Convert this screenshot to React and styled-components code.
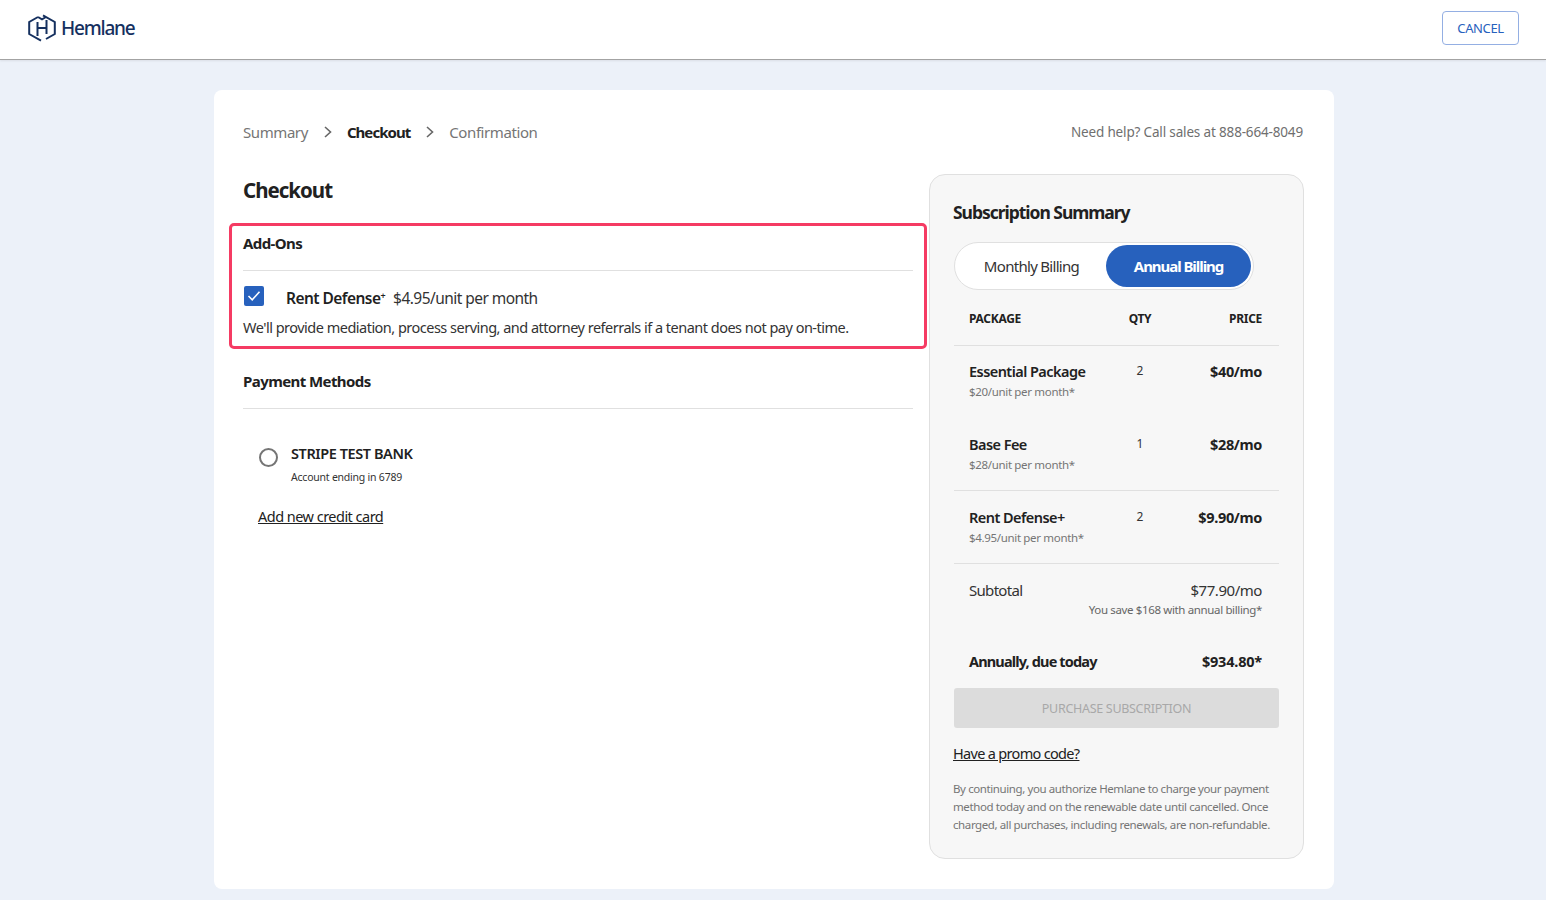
import React from "react";
import styled, { createGlobalStyle } from "styled-components";

const Global = createGlobalStyle`
  html, body { margin: 0; padding: 0; background: #ecf1f9; }
  body { font-family: "Noto Sans", "Open Sans", sans-serif; color: #212121; overflow: hidden; }
  * { box-sizing: border-box; }
`;
const Page = styled.div`height: 900px; display: flex; flex-direction: column;`;
const Header = styled.header`
  height: 60px; background: #fff; border-bottom: 1px solid #a3a3a3; box-shadow: 0 1px 2px rgba(0,0,0,.08);
  display: flex; align-items: center; justify-content: space-between; padding: 0 27px 3px 28px; flex: none;
`;
const Brand = styled.div`display: flex; align-items: center; gap: 5px; color: #15305f;`;
const BrandName = styled.span`font-size: 19px; font-weight: 500; letter-spacing: -1.2px; line-height: 28px;`;
const CancelButton = styled.button`
  width: 77px; height: 34px; border: 1px solid #94afe3; border-radius: 4px; background: #fff;
  color: #2761bd; font: 400 13px "Noto Sans", sans-serif; letter-spacing: -0.4px; padding: 0;
`;
const Card = styled.main`
  width: 1120px; height: 799px; margin: 30px auto 0 214px; background: #fff; border-radius: 8px;
  padding: 30px 31px 0 29px;
`;
const TopRow = styled.div`display: flex; justify-content: space-between; align-items: center; height: 24px; margin-bottom: 30px;`;
const Crumbs = styled.nav`display: flex; align-items: center;`;
const Crumb = styled.span`
  font-size: 15px; letter-spacing: ${p => p.$active ? "-0.95px" : "-0.42px"}; color: ${p => p.$active ? "#212121" : "#757575"};
  font-weight: ${p => p.$active ? 700 : 400};
`;
const Chevron = styled.svg`width: 10px; height: 12px; margin: 0 14px 0 15px; flex: none;`;
const Help = styled.span`font-size: 13.5px; letter-spacing: -0.16px; color: #6f6f6f;`;
const Columns = styled.div`display: grid; grid-template-columns: 670px 375px; column-gap: 16px;`;
const Left = styled.section`display: flex; flex-direction: column;`;
const Title = styled.h1`margin: 0 0 17px; font-size: 20.5px; line-height: 32px; font-weight: 700; letter-spacing: -1px;`;
const Highlight = styled.div`
  margin: 0 -14px; height: 126px; border: 3px solid #f53b63; border-radius: 5px; padding: 0 11px;
`;
const SectionHead = styled.h2`
  margin: 0; font-size: 15px; font-weight: 700; letter-spacing: -0.58px; line-height: 24px;
  padding-bottom: ${p => p.$pad}px; padding-top: ${p => p.$top}px; border-bottom: 1px solid #e0e0e0;
`;
const AddonRow = styled.div`display: flex; align-items: center; height: 30px; margin-top: 12px;`;
const CheckBox = styled.span`
  width: 20px; height: 20px; border-radius: 2px; background: #2761bd; display: inline-flex;
  align-items: center; justify-content: center; margin: 0 22px 0 1px; position: relative; top: -2px;
`;
const AddonName = styled.span`font-size: 15.5px; font-weight: 600; letter-spacing: -0.55px;`;
const Sup = styled.sup`font-size: 9px; line-height: 0; vertical-align: 5px;`;
const AddonPrice = styled.span`font-size: 15.5px; letter-spacing: -0.55px; margin-left: 8px; color: #333;`;
const AddonDesc = styled.p`margin: 3px 0 0; font-size: 14.5px; letter-spacing: -0.51px; line-height: 22px; color: #333;`;
const BankRow = styled.label`display: flex; margin: 32px 0 0 15px;`;
const Radio = styled.span`
  width: 19px; height: 19px; border: 2px solid #757575; border-radius: 50%; margin: 7px 13px 0 1px; flex: none;
`;
const BankText = styled.div`display: flex; flex-direction: column;`;
const BankName = styled.span`font-size: 14.5px; line-height: 24px; font-weight: 600; letter-spacing: -0.42px;`;
const BankSub = styled.span`font-size: 10.5px; line-height: 16px; margin-top: 4px; letter-spacing: -0.22px; color: #333;`;
const PlainLink = styled.a`
  display: block; color: #212121; text-decoration: underline; font-size: 14.5px; line-height: 22px;
  letter-spacing: ${p => p.$promo ? "-0.68px" : "-0.52px"};
  ${p => p.$card && "margin: 20px 0 0 15px;"}
  ${p => p.$promo && "margin: 14px 0 0 -1px;"}
`;
const Panel = styled.aside`
  height: 685px; background: #f7f7f7; border: 1px solid #e0e0e0; border-radius: 16px; padding: 24px;
`;
const PanelTitle = styled.h2`margin: 0 0 17px -1px; font-size: 17.5px; line-height: 26px; font-weight: 700; letter-spacing: -1.03px;`;
const Toggle = styled.div`
  width: 300px; height: 48px; padding: 2px; border: 1px solid #e0e0e0; border-radius: 24px; background: #fff;
  display: grid; grid-template-columns: 149px 145px;
`;
const ToggleOption = styled.div`
  display: flex; align-items: center; justify-content: center; border-radius: 22px; font-size: 15px;
  letter-spacing: ${p => p.$on ? "-1.05px" : "-0.7px"}; color: ${p => p.$on ? "#fff" : "#333"}; font-weight: ${p => p.$on ? 700 : 400};
  background: ${p => p.$on ? "#2761bd" : "transparent"};
`;
const Grid = styled.div`
  display: grid; grid-template-columns: 141px 60px 1fr; padding: 0 17px 0 15px;
  ${p => p.$head && "height: 56px; padding-top: 2px; align-items: center; border-bottom: 1px solid #e0e0e0;"}
  ${p => p.$line && "border-bottom: 1px solid #e0e0e0;"}
`;
const Th = styled.span`
  font-size: 12px; font-weight: 700; letter-spacing: -0.3px;
  text-align: ${p => p.$align || "left"};
`;
const RowCell = styled.div`display: flex; flex-direction: column;`;
const RowName = styled.span`font-size: 14.5px; font-weight: 600; letter-spacing: -0.55px; line-height: 22px; white-space: nowrap;`;
const RowSub = styled.span`font-size: 11.5px; line-height: 20px; letter-spacing: -0.33px; color: #757575; white-space: nowrap;`;
const Qty = styled.span`font-size: 12px; text-align: center; line-height: 22px; color: #333;`;
const Price = styled.span`font-size: 14.5px; font-weight: 700; letter-spacing: -0.35px; line-height: 22px; text-align: right;`;
const Row = styled(Grid)`padding-top: ${p => p.$top}px; padding-bottom: ${p => p.$bottom}px;`;
const Totals = styled.div`display: flex; justify-content: space-between; padding: 0 17px 0 15px; margin-top: ${p => p.$top}px;`;
const SubLabel = styled.span`font-size: 15px; letter-spacing: ${p => p.$tight ? "-0.7px" : "-0.45px"}; line-height: 22px; color: #333;`;
const SaveNote = styled.div`text-align: right; padding: 0 17px 0 15px; font-size: 11.5px; letter-spacing: -0.36px; line-height: 16px; color: #666; margin-top: 1px;`;
const DueLabel = styled.span`font-size: 14.5px; font-weight: 700; letter-spacing: ${p => p.$wide ? "-0.2px" : "-0.85px"}; line-height: 22px;`;
const Purchase = styled.button`
  display: block; width: 100%; height: 40px; margin-top: 16px; background: #dcdcdc; border: 0; border-radius: 3px;
  color: #a8a8a8; font: 400 12.5px "Noto Sans", sans-serif; letter-spacing: -0.3px;
`;
const Legal = styled.p`margin: 16px 0 0 -1px; font-size: 11.5px; line-height: 18px; letter-spacing: -0.4px; color: #757575;`;

const Logo = () => (
  <svg width="28" height="28" viewBox="0 0 28 28" fill="none" stroke="#15305f" strokeWidth="2">
    <path d="M10 3 L1.2 8 V20 L13 26.6" />
    <path d="M15 1.4 L26.8 8 V20 L18 25" />
    <path d="M10 3 L14 5.4 L18 3" />
    <path d="M9.5 8 V22 M18.5 6 V20 M9.5 14 H18.5" />
  </svg>
);
const Next = () => (
  <Chevron viewBox="0 0 10 12" fill="none" stroke="#666" strokeWidth="1.6"><path d="M2 1 L7.5 6 L2 11" /></Chevron>
);

export default function App() {
  return (
    <Page>
      <Global />
      <Header>
        <Brand><Logo /><BrandName>Hemlane</BrandName></Brand>
        <CancelButton>CANCEL</CancelButton>
      </Header>
      <Card>
        <TopRow>
          <Crumbs>
            <Crumb>Summary</Crumb><Next />
            <Crumb $active>Checkout</Crumb><Next />
            <Crumb>Confirmation</Crumb>
          </Crumbs>
          <Help>Need help? Call sales at 888-664-8049</Help>
        </TopRow>
        <Columns>
          <Left>
            <Title>Checkout</Title>
            <Highlight>
              <SectionHead $top={5} $pad={15}>Add-Ons</SectionHead>
              <AddonRow>
                <CheckBox>
                  <svg width="14" height="12" viewBox="0 0 14 12" fill="none" stroke="#fff" strokeWidth="1.6"><path d="M1.5 6 L5.2 9.8 L12.5 1.8" /></svg>
                </CheckBox>
                <AddonName>Rent Defense<Sup>+</Sup></AddonName>
                <AddonPrice>$4.95/unit per month</AddonPrice>
              </AddonRow>
              <AddonDesc>We'll provide mediation, process serving, and attorney referrals if a tenant does not pay on-time.</AddonDesc>
            </Highlight>
            <SectionHead $top={20} $pad={15}>Payment Methods</SectionHead>
            <BankRow>
              <Radio />
              <BankText>
                <BankName>STRIPE TEST BANK</BankName>
                <BankSub>Account ending in 6789</BankSub>
              </BankText>
            </BankRow>
            <PlainLink $card>Add new credit card</PlainLink>
          </Left>
          <Panel>
            <PanelTitle>Subscription Summary</PanelTitle>
            <Toggle>
              <ToggleOption>Monthly Billing</ToggleOption>
              <ToggleOption $on>Annual Billing</ToggleOption>
            </Toggle>
            <Grid $head>
              <Th>PACKAGE</Th><Th $align="center">QTY</Th><Th $align="right">PRICE</Th>
            </Grid>
            <Row $top={14} $bottom={0}>
              <RowCell><RowName>Essential Package</RowName><RowSub>$20/unit per month*</RowSub></RowCell>
              <Qty>2</Qty><Price>$40/mo</Price>
            </Row>
            <Row $top={31} $bottom={15} $line>
              <RowCell><RowName>Base Fee</RowName><RowSub>$28/unit per month*</RowSub></RowCell>
              <Qty>1</Qty><Price>$28/mo</Price>
            </Row>
            <Row $top={15} $bottom={15} $line>
              <RowCell><RowName>Rent Defense+</RowName><RowSub>$4.95/unit per month*</RowSub></RowCell>
              <Qty>2</Qty><Price>$9.90/mo</Price>
            </Row>
            <Totals $top={15}>
              <SubLabel $tight>Subtotal</SubLabel><SubLabel>$77.90/mo</SubLabel>
            </Totals>
            <SaveNote>You save $168 with annual billing*</SaveNote>
            <Totals $top={32}>
              <DueLabel>Annually, due today</DueLabel><DueLabel $wide>$934.80*</DueLabel>
            </Totals>
            <Purchase>PURCHASE SUBSCRIPTION</Purchase>
            <PlainLink $promo>Have a promo code?</PlainLink>
            <Legal>By continuing, you authorize Hemlane to charge your payment method today and on the renewable date until cancelled. Once charged, all purchases, including renewals, are non-refundable.</Legal>
          </Panel>
        </Columns>
      </Card>
    </Page>
  );
}
